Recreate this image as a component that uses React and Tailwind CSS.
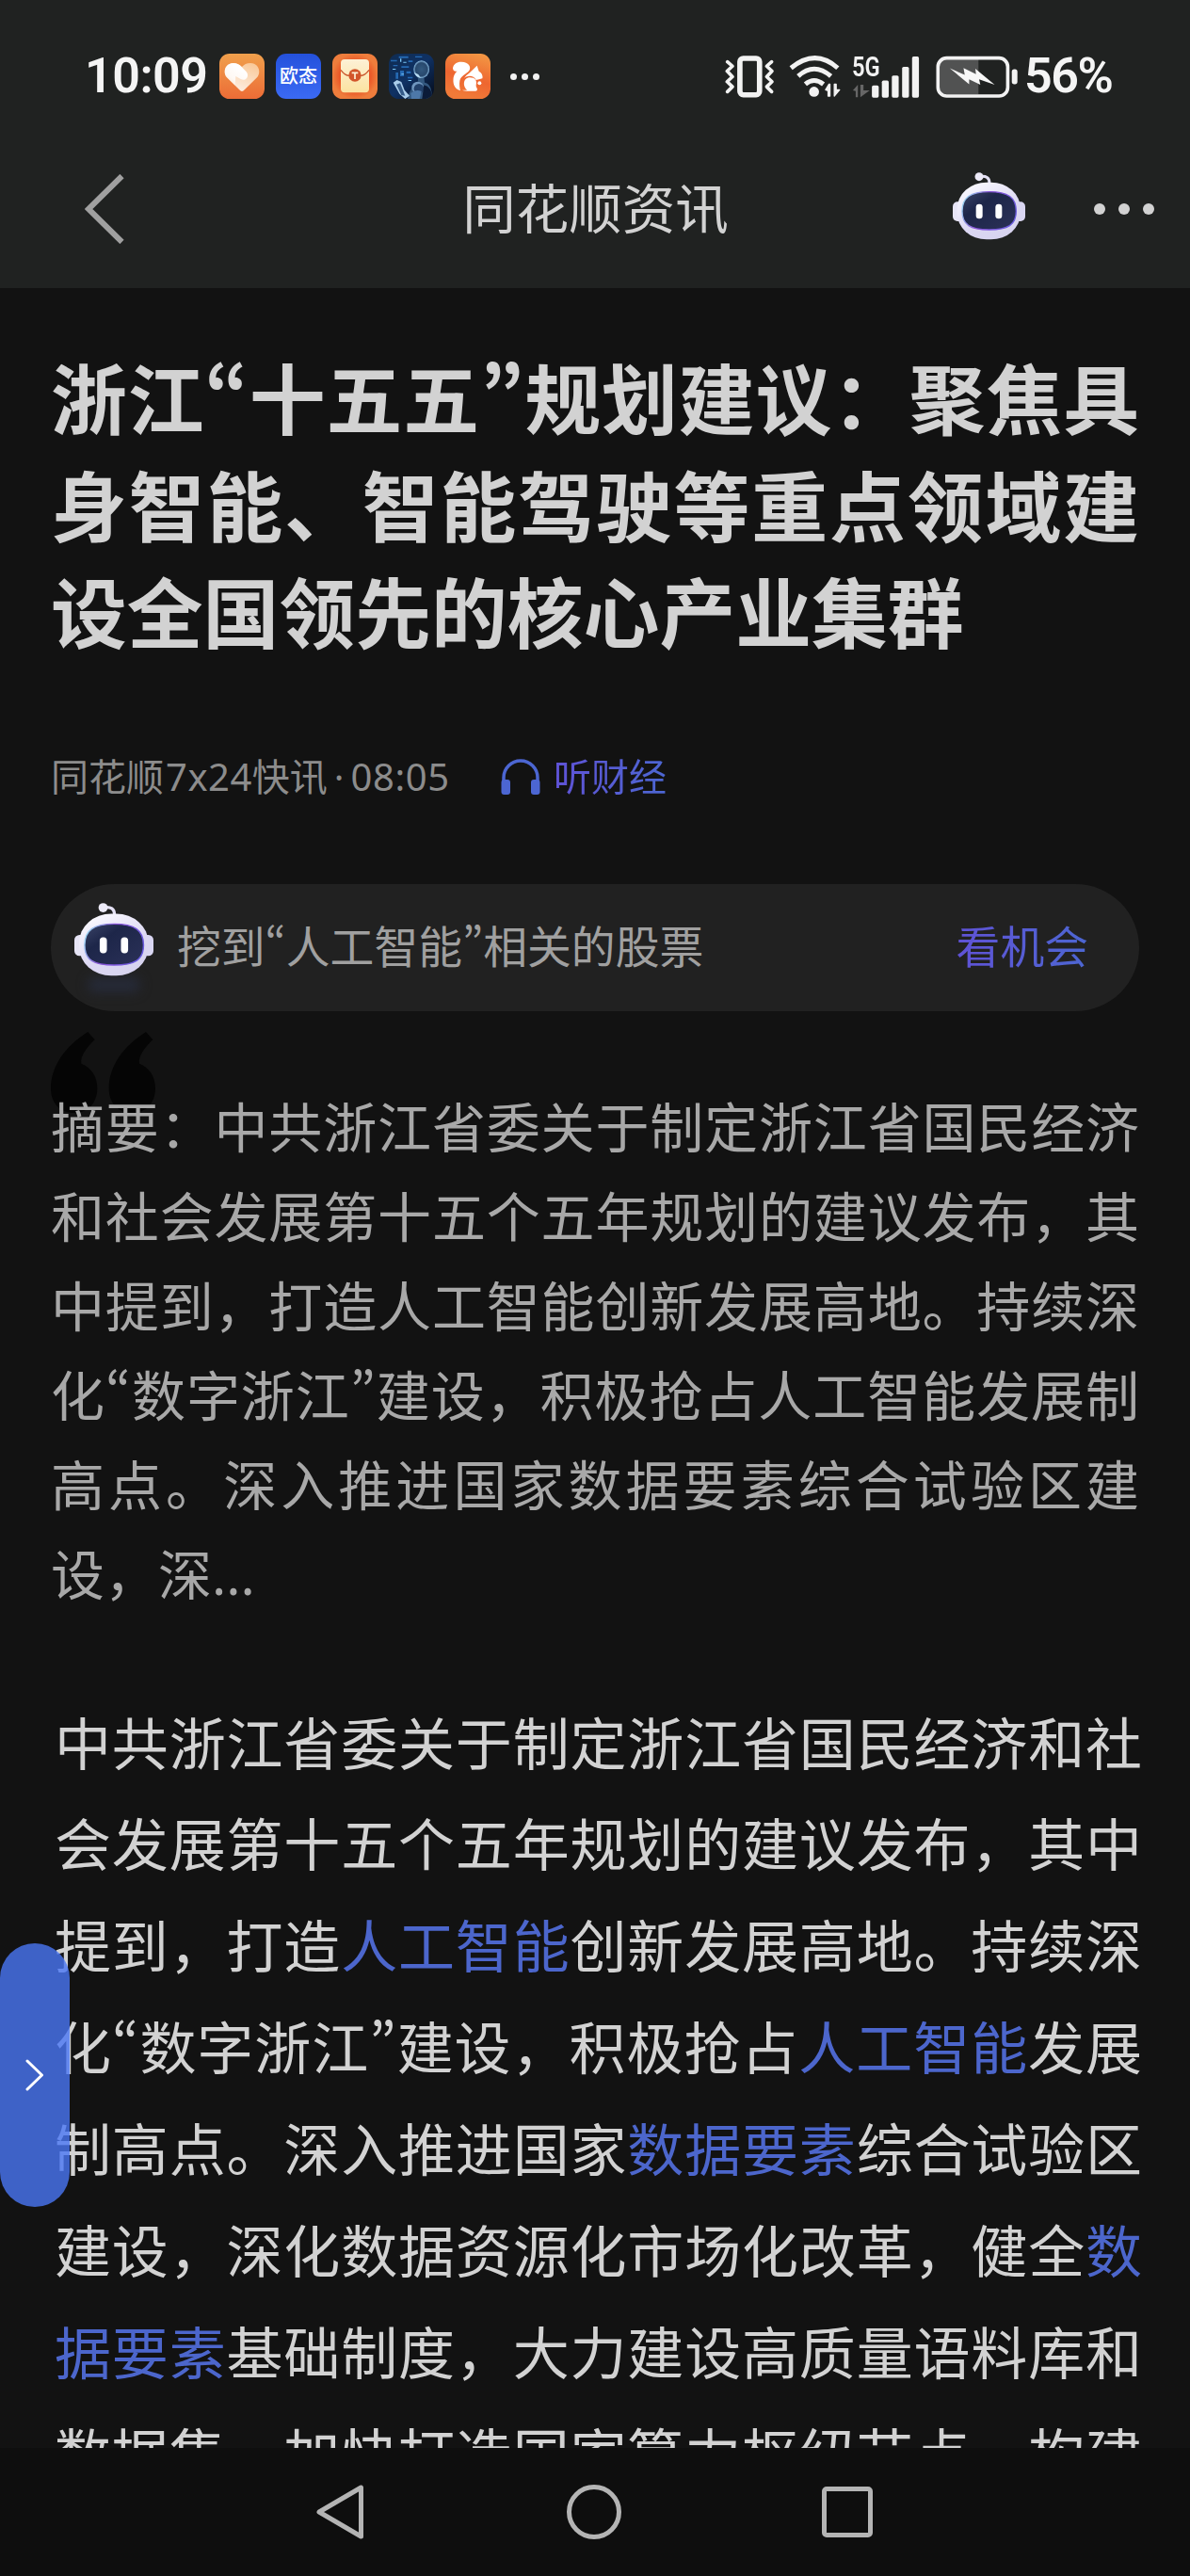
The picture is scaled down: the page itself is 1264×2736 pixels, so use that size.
import { useId } from 'react';

const headline = [
  { text: '浙江“十五五”规划建议：聚焦具', full: true },
  { text: '身智能、智能驾驶等重点领域建', full: true },
  { text: '设全国领先的核心产业集群', full: false },
];

const summary = [
  { text: '摘要：中共浙江省委关于制定浙江省国民经济', full: true },
  { text: '和社会发展第十五个五年规划的建议发布，其', full: true },
  { text: '中提到，打造人工智能创新发展高地。持续深', full: true },
  { text: '化“数字浙江”建设，积极抢占人工智能发展制', full: true },
  { text: '高点。深入推进国家数据要素综合试验区建', full: true },
  { text: '设，深...', full: false },
];

// strings are plain text, { link } entries are highlighted topics
const body = [
  ['中共浙江省委关于制定浙江省国民经济和社'],
  ['会发展第十五个五年规划的建议发布，其中'],
  ['提到，打造', { link: '人工智能' }, '创新发展高地。持续深'],
  ['化“数字浙江”建设，积极抢占', { link: '人工智能' }, '发展'],
  ['制高点。深入推进国家', { link: '数据要素' }, '综合试验区'],
  ['建设，深化数据资源化市场化改革，健全', { link: '数' }],
  [{ link: '据要素' }, '基础制度，大力建设高质量语料库和'],
  ['数据集。加快打造国家算力枢纽节点，构建'],
];

const HeartTile = () => (
  <svg viewBox="0 0 144 144" className="w-12 h-12">
    <defs>
      <linearGradient id="heartBg" x1="0" y1="0" x2="0" y2="1">
        <stop offset="0" stopColor="#f0a04c" />
        <stop offset="1" stopColor="#ec6c36" />
      </linearGradient>
      <linearGradient id="heartFg" x1="0.9" y1="0" x2="0.4" y2="1">
        <stop offset="0" stopColor="#f9c795" />
        <stop offset="1" stopColor="#fdeee2" />
      </linearGradient>
      <linearGradient id="heartFold" x1="0.7" y1="0.3" x2="0.2" y2="1">
        <stop offset="0" stopColor="#fff" />
        <stop offset="0.6" stopColor="#fff" stopOpacity="0.8" />
        <stop offset="1" stopColor="#fff" stopOpacity="0" />
      </linearGradient>
    </defs>
    <rect width="144" height="144" rx="32" fill="url(#heartBg)" />
    <path
      d="M72 120 Q68 120 63 114 L24 76 C10 60 18 31 44 30 C57 30 66 36 72 42 C78 35 87 30 99 30 C126 31 134 58 120 76 L81 114 Q76 120 72 120Z"
      fill="url(#heartFg)"
    />
    <path d="M24 76 C10 60 18 31 44 30 C57 30 64 35 70 41 L86 58 C97 72 84 90 68 81 L52 72 L50 101Z" fill="url(#heartFold)" />
  </svg>
);

const OutaiTile = () => (
  <div className="w-12 h-12 rounded-[11px] bg-gradient-to-b from-[#2451dc] to-[#3b6af4] flex items-center justify-center text-white text-[20px] leading-none font-medium">
    欧态
  </div>
);

const EnvelopeTile = () => (
  <svg viewBox="0 0 144 144" className="w-12 h-12">
    <defs>
      <radialGradient id="envBg">
        <stop offset="0.55" stopColor="#e8481f" />
        <stop offset="1" stopColor="#ee7d3c" />
      </radialGradient>
      <linearGradient id="envFg" x1="0" y1="0" x2="0" y2="1">
        <stop offset="0" stopColor="#fdf1d6" />
        <stop offset="1" stopColor="#fbe3a0" />
      </linearGradient>
    </defs>
    <rect width="144" height="144" rx="32" fill="url(#envBg)" />
    <rect x="27" y="18" width="90" height="106" rx="12" fill="url(#envFg)" />
    <path d="M27 52 Q40 70 54 70 M90 70 Q104 70 117 52" fill="none" stroke="#c9562c" strokeWidth="4" />
    <circle cx="72" cy="69" r="20" fill="#d2552a" />
    <path d="M62 61 H82 M72 61 V81" stroke="#fdf1d6" strokeWidth="5" fill="none" />
  </svg>
);

const RobotPhotoTile = () => (
  <svg viewBox="0 0 144 144" className="w-12 h-12">
    <defs>
      <clipPath id="photoClip">
        <rect width="144" height="144" rx="32" />
      </clipPath>
      <linearGradient id="photoBg" x1="0" y1="0" x2="1" y2="1">
        <stop offset="0" stopColor="#0f2c52" />
        <stop offset="0.5" stopColor="#0f3163" />
        <stop offset="1" stopColor="#040a18" />
      </linearGradient>
      <radialGradient id="photoHead">
        <stop offset="0" stopColor="#33597f" />
        <stop offset="0.75" stopColor="#28486d" />
        <stop offset="1" stopColor="#8fc0e6" />
      </radialGradient>
    </defs>
    <g clipPath="url(#photoClip)">
      <rect width="144" height="144" fill="url(#photoBg)" />
      <path d="M6 20h20v5H6zM32 8h30v6H32zM62 22h14v5H62zM14 36h14v4H14zM40 40h24v5H40zM36 54h12v18H36zM56 56h14v7H56zM22 60h8v20h-8zM60 74h16v5H60zM84 8h22v4H84z" fill="#2a78c8" opacity="0.8" />
      <path d="M12 48h10v3H12zM46 26h10v3H46zM40 64h8v3h-8zM62 84h10v3H62zM36 16h4v10h-4z" fill="#7cc8f6" />
      <path d="M92 74 L112 74 L114 92 Q138 96 138 144 H60 Q66 106 94 94Z" fill="#33587f" />
      <ellipse cx="104" cy="50" rx="25" ry="28" fill="url(#photoHead)" />
      <path d="M80 60 Q88 76 102 78 L94 66Z" fill="#b9ddf4" />
      <circle cx="92" cy="108" r="19" fill="#6f96be" />
      <circle cx="96" cy="112" r="16" fill="#23416a" />
      <path d="M14 92 L26 84 L40 90 L50 116 L66 134 L52 144 L34 128Z" fill="#a9cdea" />
      <path d="M24 98 L36 94 L52 134 L40 132Z" fill="#355b88" />
      <path d="M70 126 Q86 112 104 120 L98 144 H72Z" fill="#4d78a8" />
      <path d="M112 100 Q136 104 140 144 H106Z" fill="#0b1b38" />
    </g>
  </svg>
);

const SquirrelTile = () => (
  <svg viewBox="0 0 144 144" className="w-12 h-12">
    <defs>
      <linearGradient id="ucBg" x1="0.9" y1="0" x2="0.6" y2="1">
        <stop offset="0" stopColor="#f39a45" />
        <stop offset="0.6" stopColor="#ee6630" />
        <stop offset="1" stopColor="#f07a38" />
      </linearGradient>
    </defs>
    <rect width="144" height="144" rx="32" fill="url(#ucBg)" />
    <path
      d="M48 118 C26 112 24 92 26 76 C28 66 34 58 38 56 C28 58 24 52 24 46 C26 32 38 25 52 26 C74 27 84 42 76 54 C66 66 50 70 46 86 C44 98 46 110 48 118Z"
      fill="#fff"
    />
    <path d="M101 38 L107 56 C118 62 120 72 118 79 L98 84 C90 68 72 68 60 78 Q66 68 76 62Z" fill="#fff" />
    <path d="M79 76 C95 76 102 86 98 100 Q97 106 101 110 Q104 118 96 119 H68 Q56 118 54 116 H70 C56 108 54 76 79 76Z" fill="#fff" />
    <circle cx="109" cy="94" r="6" fill="#fff" />
  </svg>
);

const VibrateIcon = () => (
  <svg viewBox="0 0 160 136" className="w-[53px] h-[45px] ml-[30px]" fill="none" stroke="#f2f2f2">
    <rect x="48" y="9" width="63" height="117" rx="11" strokeWidth="17" />
    <path d="M8 20 L24 34 L7 50 L24 68 L7 84 L24 100 L8 116" strokeWidth="11" strokeLinecap="round" strokeLinejoin="round" />
    <path d="M150 20 L134 34 L151 50 L134 68 L151 84 L134 100 L150 116" strokeWidth="11" strokeLinecap="round" strokeLinejoin="round" />
  </svg>
);

const WifiIcon = () => (
  <svg viewBox="0 0 168 136" className="w-14 h-[45px] ml-[15px]" fill="none" stroke="#f2f2f2" strokeLinecap="butt">
    <path d="M6 40 Q84 -24 156 40" strokeWidth="15" />
    <path d="M29 66 Q80 20 134 66" strokeWidth="15" />
    <path d="M52 92 Q80 68 110 92" strokeWidth="15" />
    <circle cx="80" cy="116" r="16" fill="#f2f2f2" stroke="none" />
    <path d="M117 110 L128 92 H131 V130 H125 V113Z" fill="#f2f2f2" strokeWidth="4" strokeLinejoin="round" />
    <path d="M145 92 V130 L162 110 H151 V92Z" fill="#f2f2f2" strokeWidth="4" strokeLinejoin="round" />
  </svg>
);

const SignalIcon = () => (
  <div className="relative w-[72px] h-[45px] ml-[11px]">
    <span className="absolute left-0 -top-[2px] text-[29px] leading-[29px] font-semibold origin-left scale-x-[0.82] font-['Roboto'] text-[#f2f2f2]">5G</span>
    <svg viewBox="0 0 216 136" className="w-[72px] h-[45px]">
      <path d="M2 112 L18 94 V134 H11 V114Z M26 94 V134 L56 112 H36 V94Z" fill="#666" />
      <g fill="#f2f2f2">
        <rect x="63" y="96" width="22" height="39" rx="5" />
        <rect x="95" y="80" width="22" height="55" rx="5" />
        <rect x="127" y="64" width="22" height="71" rx="5" />
        <rect x="160" y="36" width="22" height="99" rx="5" />
        <rect x="192" y="3" width="22" height="132" rx="5" />
      </g>
    </svg>
  </div>
);

const BatteryIcon = () => (
  <svg viewBox="0 0 264 136" className="w-[88px] h-[45px] ml-[17px]">
    <path d="M12 30 Q12 12 34 12 H136 V124 H34 Q12 124 12 104Z" fill="#515252" />
    <rect x="6" y="8" width="224" height="122" rx="28" fill="none" stroke="#f2f2f2" strokeWidth="11" />
    <rect x="243" y="44" width="18" height="48" rx="8" fill="#f2f2f2" />
    <path d="M44 41 L92 62 L88 40 L128 60 L126 42 L188 94 L138 76 L142 94 L106 76 L106 92Z" fill="#f7f7f7" />
  </svg>
);

const RobotIcon = ({ className }) => {
  const id = useId();
  return (
    <svg viewBox="0 0 231 216" preserveAspectRatio="none" className={className}>
      <defs>
        <linearGradient id={`${id}shell`} x1="0.2" y1="0" x2="0.8" y2="1">
          <stop offset="0" stopColor="#fbfaff" />
          <stop offset="0.6" stopColor="#dcd8f3" />
          <stop offset="1" stopColor="#d6d3ee" />
        </linearGradient>
        <linearGradient id={`${id}rim`} x1="0" y1="0.3" x2="1" y2="0.6">
          <stop offset="0" stopColor="#9bd6f2" />
          <stop offset="0.4" stopColor="#8a52d8" />
          <stop offset="1" stopColor="#6a5ce0" />
        </linearGradient>
        <linearGradient id={`${id}face`} x1="0" y1="0" x2="1" y2="1">
          <stop offset="0" stopColor="#3b4468" />
          <stop offset="0.35" stopColor="#1d2649" />
          <stop offset="1" stopColor="#2b3158" />
        </linearGradient>
      </defs>
      <path d="M84 14 Q118 8 117 36" fill="none" stroke="#e4e1f5" strokeWidth="9" />
      <circle cx="84" cy="14" r="13.5" fill="#eceaf8" />
      <rect x="0" y="94" width="34" height="62" rx="15" fill="#e6e4f6" />
      <rect x="197" y="94" width="34" height="62" rx="15" fill="#d9d6f2" />
      <rect x="14" y="32" width="202" height="182" rx="94" ry="84" fill={`url(#${id}shell)`} />
      <path
        d="M116 62 C176 62 202 80 202 124 C202 168 176 183 116 183 C56 183 30 168 30 124 C30 80 56 62 116 62Z"
        fill={`url(#${id}face)`}
        stroke={`url(#${id}rim)`}
        strokeWidth="4"
      />
      <rect x="74" y="101" width="21" height="47" rx="10" fill="#fff" />
      <rect x="136" y="101" width="21" height="47" rx="10" fill="#fff" />
    </svg>
  );
};

// curly quotes take half a cell instead of a full one
const Quoted = ({ text }) =>
  text.split(/([“”])/).map((part, i) =>
    part === '“' || part === '”' ? (
      <span key={i} className="leading-none font-['Noto_Sans_CJK_SC'] [font-feature-settings:'pwid']">{part}</span>
    ) : (
      part
    )
  );

const Line = ({ full, children }) => (
  <span className={full ? 'block whitespace-nowrap text-justify [text-align-last:justify]' : 'block whitespace-nowrap'}>
    {children}
  </span>
);

const StatusBar = () => (
  <div className="h-[162px] flex items-center pl-[90px]">
    <span className="w-[143px] text-[52px] leading-none font-semibold tracking-[-0.500px] font-['Roboto'] text-[#f4f4f4]">10:09</span>
    <div className="flex items-center gap-3">
      <HeartTile />
      <OutaiTile />
      <EnvelopeTile />
      <RobotPhotoTile />
      <SquirrelTile />
    </div>
    <div className="flex gap-[5px] ml-[21px]">
      <i className="w-[7px] h-[7px] rounded-full bg-[#f2f2f2]" />
      <i className="w-[7px] h-[7px] rounded-full bg-[#f2f2f2]" />
      <i className="w-[7px] h-[7px] rounded-full bg-[#f2f2f2]" />
    </div>
    <div className="flex items-center ml-auto w-[524px]">
      <VibrateIcon />
      <WifiIcon />
      <SignalIcon />
      <BatteryIcon />
      <span className="ml-[6px] text-[52px] leading-none font-semibold tracking-[-1.500px] font-['Roboto'] text-[#f4f4f4]">56%</span>
    </div>
  </div>
);

const TitleBar = () => (
  <div className="h-[120px] grid grid-cols-[1fr_auto_1fr] items-center">
    <svg viewBox="0 0 42 74" className="w-[42px] h-[74px] ml-[90px]" fill="none" stroke="#a0a0a0" strokeWidth="6">
      <path d="M39.500 2 L4 37 L39.500 72" />
    </svg>
    <h1 className="text-[56.500px] leading-none pl-px pt-px text-[#d2d2d2]">同花顺资讯</h1>
    <div className="flex items-center justify-end pr-[38px]">
      <RobotIcon className="w-[77px] h-[72px] mr-[73px] -mt-[6px]" />
      <div className="flex gap-[14px]">
        <i className="w-3 h-3 rounded-full bg-[#d2d2d2]" />
        <i className="w-3 h-3 rounded-full bg-[#d2d2d2]" />
        <i className="w-3 h-3 rounded-full bg-[#d2d2d2]" />
      </div>
    </div>
  </div>
);

const App = () => {
  return (
    <div
      lang="zh-CN"
      className="relative w-[1264px] h-[2736px] overflow-hidden flex flex-col bg-[#121212] font-['Noto_Sans','Noto_Sans_CJK_SC',sans-serif]"
    >
      <header className="h-[306px] shrink-0 bg-[#202221]">
        <StatusBar />
        <TitleBar />
      </header>

      <main className="h-[2294px] shrink-0 overflow-hidden pl-[54px] pr-[54px] pt-[62px]">
        <h2 className="text-[80.800px] leading-[113.500px] font-bold text-[#d2d2d2]">
          {headline.map((line) => (
            <Line key={line.text} full={line.full}><Quoted text={line.text} /></Line>
          ))}
        </h2>

        <div className="flex items-center h-[60px] mt-[86px] text-[40px] leading-[60px]">
          <span className="w-[478px] whitespace-nowrap text-[#8c8c8c]">
            同花顺<span className="ml-[2px] tracking-[0.500px]">7x24</span>快讯<span className="mx-[7px]">·</span>
            <span className="tracking-[0.600px]">08:05</span>
          </span>
          <svg viewBox="0 0 84 76" className="w-[42px] h-[38px]">
            <path d="M6 50 V40 A36 36 0 0 1 78 40 V50" fill="none" stroke="#4c66d2" strokeWidth="7" />
            <rect x="1" y="44" width="19" height="32" rx="6" fill="#4c66d2" />
            <rect x="64" y="44" width="19" height="32" rx="6" fill="#4c66d2" />
          </svg>
          <span className="ml-[14px] text-transparent bg-clip-text bg-gradient-to-r from-[#5f52d6] to-[#4c66d2]">听财经</span>
        </div>

        <div className="flex items-center h-[135px] mt-[84px] rounded-full bg-[#212121] pl-[25px] pr-[54px] text-[46.800px] leading-[60px]">
          <div className="relative">
            <div className="absolute left-[14px] top-[62px] w-[56px] h-[16px] rounded-full bg-[#262a38] blur-[6px]" />
            <RobotIcon className="relative w-[84px] h-[78px] -mt-[17px]" />
          </div>
          <span className="ml-[25px] -mt-[3px] text-[#a0a0a0]"><Quoted text="挖到“人工智能”相关的股票" /></span>
          <span className="ml-auto -mt-[3px] text-transparent bg-clip-text bg-gradient-to-r from-[#5f52d6] to-[#4c66d2]">看机会</span>
        </div>

        <div className="relative mt-[76px]">
          <svg viewBox="0 0 333 258" className="absolute left-0 -top-[54px] w-[111px] h-[86px]" fill="#050505">
            <path d="M118 0 L140 25 C118 45 92 78 97 101 C128 114 148 140 148 180 C148 226 118 258 76 258 C30 258 0 228 0 180 C0 110 46 45 118 0Z" />
            <path d="M303 0 L325 25 C303 45 277 78 282 101 C313 114 333 140 333 180 C333 226 303 258 261 258 C215 258 185 228 185 180 C185 110 231 45 303 0Z" />
          </svg>
          <p className="relative text-[57px] leading-[95px] text-[#a8a8a8]">
            {summary.map((line) => (
              <Line key={line.text} full={line.full}><Quoted text={line.text} /></Line>
            ))}
          </p>
        </div>

        <p className="mt-[79px] ml-1 -mr-[3px] text-[60px] leading-[107.900px] text-[#d2d2d2]">
          {body.map((parts, index) => (
            <Line key={index} full>
              {parts.map((part, i) =>
                typeof part === 'string' ? (
                  <Quoted key={i} text={part} />
                ) : (
                  <a key={i} className="text-[#4c66cc]">{part.link}</a>
                )
              )}
            </Line>
          ))}
        </p>
      </main>

      <footer className="h-[136px] shrink-0 flex items-center justify-center gap-[213px] pr-[3px] bg-[#0e0e0e]">
        <svg viewBox="0 0 54 60" className="w-[54px] h-[60px]" fill="none" stroke="#b4b4b4" strokeWidth="5" strokeLinejoin="round">
          <path d="M48.500 4 V56 L4 30Z" />
        </svg>
        <i className="w-[58px] h-[58px] rounded-full border-[5px] border-[#b4b4b4]" />
        <i className="w-[54px] h-[54px] rounded-[5px] border-[5px] border-[#b4b4b4]" />
      </footer>

      {/* drawer handle floats over the article */}
      <button className="absolute left-0 top-[2064px] w-[74px] h-[280px] rounded-[37px] bg-[rgba(74,119,245,0.8)] flex items-center justify-center">
        <svg viewBox="0 0 20 34" className="w-5 h-[34px]" fill="none" stroke="#fff" strokeWidth="3" strokeLinecap="round" strokeLinejoin="round">
          <path d="M2 2 L17.500 17 L2 32" />
        </svg>
      </button>
    </div>
  );
};

export default App;
